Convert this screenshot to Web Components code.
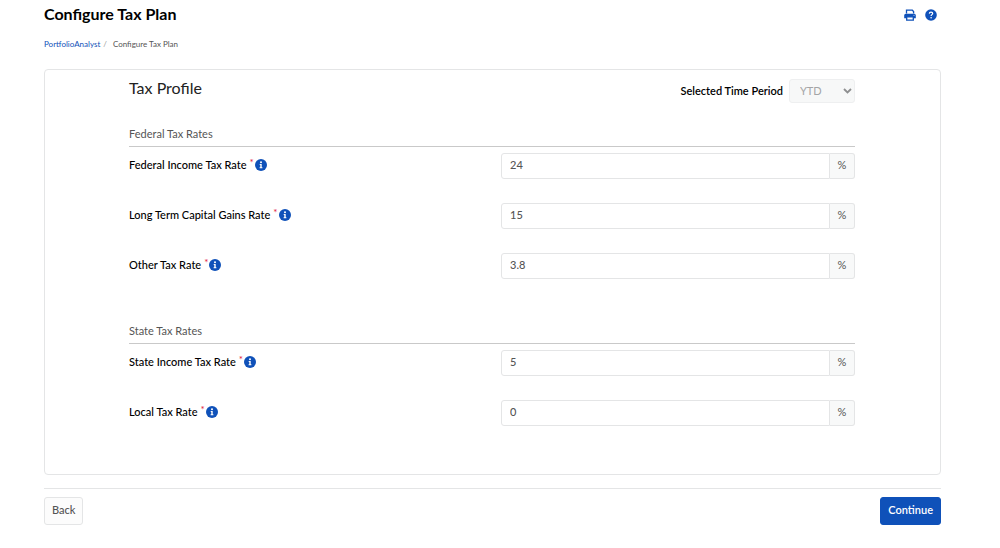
<!DOCTYPE html>
<html lang="en">
<head>
<meta charset="utf-8">
<meta name="viewport" content="width=device-width, initial-scale=1">
<title>Configure Tax Plan</title>
<style>
  body {
    margin: 0;
    background: #fff;
    color: #111;
    font-family: Lato, Roboto, "Liberation Sans", sans-serif;
    font-size: 11px;
    line-height: 16px;
    --blue: #0f51b9;
    --line: #e4e5e6;
    --soft: #f8f9f9;
    --muted: #555;
  }
</style>
</head>
<body>
<tax-plan-page></tax-plan-page>

<script>
const define = (name, markup, setup) => {
  const template = document.createElement('template');
  template.innerHTML = markup;
  customElements.define(name, class extends HTMLElement {
    constructor() {
      super();
      this.attachShadow({ mode: 'open' }).append(template.content.cloneNode(true));
    }
    connectedCallback() {
      if (setup) setup(this, this.shadowRoot);
    }
  });
};

define('info-icon', `
  <style>
    :host { display: block; width: 12px; height: 12px; color: var(--blue); }
    svg { display: block; width: 100%; height: 100%; }
  </style>
  <svg viewBox="0 0 12 12" role="img" aria-label="More information">
    <circle cx="6" cy="6" r="6" fill="currentColor"/>
    <circle cx="6" cy="3.2" r="1" fill="#fff"/>
    <path d="M4.7 4.9h2v3.3h.7v1.1H4.6V8.2h.7V6h-.6z" fill="#fff"/>
  </svg>`);

define('page-header', `
  <style>
    :host { display: flex; justify-content: space-between; align-items: center; height: 30px; }
    h1 { margin: 0; padding-bottom: 2px; font-size: 16px; line-height: 20px; font-weight: 700; color: #000; }
    nav { display: flex; gap: 9px; padding-right: 4px; }
    button { display: block; padding: 0; border: 0; background: none; color: var(--blue); width: 12px; height: 12px; }
    svg { display: block; width: 12px; height: 12px; }
  </style>
  <h1><slot></slot></h1>
  <nav aria-label="Page tools">
    <button type="button" aria-label="Print">
      <svg viewBox="0 0 12 12">
        <path d="M2.5 4.6V1.2h5.800l1.300 1.300v2.100" fill="none" stroke="currentColor" stroke-width="1.300"/>
        <path d="M1.800 4.700h8.400A1.600 1.600 0 0 1 11.800 6.300v2.900H.2V6.300A1.600 1.600 0 0 1 1.800 4.700z" fill="currentColor"/>
        <path d="M2.700 7.900h6.600v3.200H2.700z" fill="#fff" stroke="currentColor" stroke-width="1.300"/>
        <circle cx="10" cy="6.300" r=".5" fill="#fff"/>
      </svg>
    </button>
    <button type="button" aria-label="Help">
      <svg viewBox="0 0 12 12">
        <circle cx="6" cy="6" r="5.800" fill="currentColor"/>
        <path d="M4.300 4.600c.1-1 .8-1.500 1.700-1.500 1 0 1.700.5 1.700 1.400C7.700 5.700 6.100 5.600 6.100 7" fill="none" stroke="#fff" stroke-width="1.200"/>
        <circle cx="6.100" cy="8.700" r=".8" fill="#fff"/>
      </svg>
    </button>
  </nav>`);

define('bread-crumb', `
  <style>
    :host { display: block; padding: 8px 0 19px; font-size: 8px; line-height: 12px; color: var(--muted); }
    ol { display: flex; gap: 3px; margin: 0; padding: 0; list-style: none; }
    li + li::before { content: "/"; margin-right: 6px; color: #999; }
    a { color: var(--blue); text-decoration: none; }
  </style>
  <nav aria-label="Breadcrumb">
    <ol>
      <li><a href="#portfolio">PortfolioAnalyst</a></li>
      <li aria-current="page">Configure Tax Plan</li>
    </ol>
  </nav>`);

define('period-select', `
  <style>
    :host { display: flex; align-items: center; gap: 6px; }
    label { font-weight: 600; color: #000; }
    div { position: relative; }
    select {
      display: block; appearance: none; box-sizing: border-box; width: 66px; height: 24px; padding: 0 10px;
      border: 1px solid #eeeff0; border-radius: 3px; background: #f7f8f8; color: #a4a5a6;
      font: inherit; opacity: 1;
    }
    svg { position: absolute; right: 3px; top: 8px; width: 9px; height: 8px; pointer-events: none; }
  </style>
  <label for="period">Selected Time Period</label>
  <div>
    <select id="period" disabled><option>YTD</option></select>
    <svg viewBox="0 0 9 8" aria-hidden="true"><path d="M1 2l3.500 3.500L8 2" fill="none" stroke="#8e8f90" stroke-width="1.800"/></svg>
  </div>`);

define('rate-section', `
  <style>
    :host { display: block; }
    h3 {
      margin: 0 0 6px; padding-bottom: 4px; border-bottom: 1px solid #c9c9c9;
      font-size: 11px; line-height: 16px; font-weight: 400; color: var(--muted);
    }
    div { display: grid; gap: 24px; }
  </style>
  <h3></h3>
  <div><slot></slot></div>`, (host, root) => {
    root.querySelector('h3').textContent = host.getAttribute('heading');
  });

define('rate-field', `
  <style>
    :host { display: grid; grid-template-columns: 1fr 1fr; gap: 18px; }
    .name { display: flex; align-items: center; height: 24px; }
    label { font-weight: 500; color: #000; }
    .star { align-self: flex-start; margin: 0 1px 0 3px; font-size: 10px; line-height: 18px; color: #e0203a; }
    .group { display: flex; }
    input, .unit { box-sizing: border-box; height: 26px; border: 1px solid var(--line); }
    input {
      flex: 1; min-width: 0; margin: 0; padding: 0 8px 4px; border-radius: 3px 0 0 3px;
      background: #fff; color: var(--muted); font: inherit; font-weight: 500;
    }
    .unit {
      flex: none; width: 25px; border-left: 0; border-radius: 0 3px 3px 0; background: var(--soft);
      color: var(--muted); text-align: center; line-height: 22px;
    }
  </style>
  <div class="name">
    <label for="rate"></label><span class="star" aria-hidden="true">*</span><info-icon></info-icon>
  </div>
  <div class="group"><input id="rate" type="text" inputmode="decimal" required><span class="unit">%</span></div>`,
  (host, root) => {
    root.querySelector('label').textContent = host.getAttribute('label');
    root.querySelector('input').value = host.getAttribute('value');
  });

define('tax-profile', `
  <style>
    :host { display: block; border: 1px solid var(--line); border-radius: 4px; padding: 9px 85px 48px 84px; }
    header { display: flex; justify-content: space-between; align-items: flex-start; margin-bottom: 23px; }
    h2 { margin: 0; font-size: 16px; line-height: 18px; font-weight: 400; color: #222; }
    form { display: grid; gap: 44px; }
  </style>
  <header><h2>Tax Profile</h2><period-select></period-select></header>
  <form>
    <rate-section heading="Federal Tax Rates">
      <rate-field label="Federal Income Tax Rate" value="24"></rate-field>
      <rate-field label="Long Term Capital Gains Rate" value="15"></rate-field>
      <rate-field label="Other Tax Rate" value="3.8"></rate-field>
    </rate-section>
    <rate-section heading="State Tax Rates">
      <rate-field label="State Income Tax Rate" value="5"></rate-field>
      <rate-field label="Local Tax Rate" value="0"></rate-field>
    </rate-section>
  </form>`);

define('action-button', `
  <style>
    :host { display: block; }
    button {
      display: block; height: 28px; padding: 0 7px 2px; border: 1px solid var(--line); border-radius: 3px;
      background: #fcfcfc; color: var(--muted); font: inherit; font-weight: 500;
    }
    :host([primary]) button { border-color: var(--blue); background: var(--blue); color: #fff; font-weight: 600; }
  </style>
  <button type="button"><slot></slot></button>`);

define('tax-plan-page', `
  <style>
    :host { display: block; padding: 0 59px 23px 44px; }
    footer { display: flex; justify-content: space-between; margin-top: 13px; padding-top: 8px; border-top: 1px solid var(--line); }
  </style>
  <page-header>Configure Tax Plan</page-header>
  <bread-crumb></bread-crumb>
  <main><tax-profile></tax-profile></main>
  <footer>
    <action-button>Back</action-button>
    <action-button primary>Continue</action-button>
  </footer>`);
</script>
</body>
</html>
